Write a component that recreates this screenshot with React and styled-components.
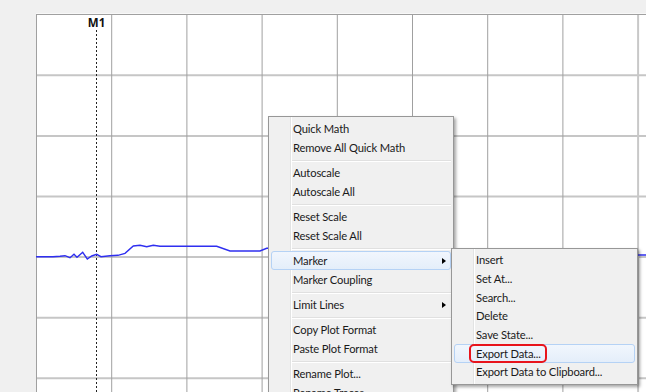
import React from 'react';
import styled, { createGlobalStyle } from 'styled-components';

const GlobalStyle = createGlobalStyle`
  html, body {
    margin: 0;
    padding: 0;
    background: #f0f0f0;
  }
  body {
    font-family: Lato, "Noto Sans", "Liberation Sans", sans-serif;
  }
`;

const Page = styled.div`
  position: relative;
  width: 646px;
  height: 392px;
  overflow: hidden;
  background: #f0f0f0;
  padding: 13px 0 0 36px;
  box-sizing: border-box;
  display: flex;
`;

const PlotPanel = styled.div`
  flex: 1;
  background: #ffffff;
  border-top: 1px solid #f8f8f8;
`;

const PlotSvg = styled.svg`
  display: block;
  width: 100%;
  height: 100%;
`;

// context menu, opened where the user right-clicked in the plot
const Menu = styled.div`
  position: absolute;
  left: 268px;
  top: 116px;
  width: 186px;
  box-sizing: border-box;
  display: flex;
  flex-direction: column;
  background: #f0f0f0;
  border: 1px solid #979797;
  box-shadow: 2px 2px 3px rgba(0, 0, 0, 0.35);
  padding: 2px;
  font-size: 11.2px;
  letter-spacing: -0.15px;
  color: #1a1a1a;
  z-index: 1;

  &::before {
    content: "";
    position: absolute;
    left: 21px;
    top: 0;
    bottom: 0;
    width: 1px;
    background: #e2e3e3;
    box-shadow: 1px 0 0 #ffffff;
  }
`;

// cascading menu hangs off its parent item
const SubMenu = styled(Menu)`
  left: calc(100% + 1px);
  top: -4px;
  width: 187px;
  z-index: 2;
`;

const Item = styled.div`
  position: relative;
  height: ${p => p.h || 19}px;
  display: flex;
  align-items: center;
  padding: 0 4px 0 21px;
  box-sizing: border-box;
  border: 1px solid ${p => (p.active ? '#b5d2f5' : 'transparent')};
  border-radius: 3px;
  background: ${p =>
    p.active ? 'linear-gradient(#f1f6fd, #e4eefa)' : 'transparent'};
  white-space: nowrap;
`;

const Label = styled.span`
  position: relative;
  padding-bottom: 1px;

  ${p =>
    p.annotated &&
    `
    &::after {
      content: "";
      position: absolute;
      left: -7px;
      right: -6px;
      top: -3px;
      bottom: -2px;
      border: 2px solid #e8141c;
      border-radius: 5px;
    }
  `}
`;

const Arrow = styled.span`
  margin-left: auto;
  width: 0;
  height: 0;
  border-top: 3.5px solid transparent;
  border-bottom: 3.5px solid transparent;
  border-left: 4px solid #000;
`;

const Separator = styled.div`
  height: 6px;
  display: flex;
  align-items: center;
  padding-left: 21px;

  &::after {
    content: "";
    flex: 1;
    height: 1px;
    background: #e0e0e0;
    box-shadow: 0 1px 0 #ffffff;
  }
`;

const markerItems = [
  { label: 'Insert' },
  { label: 'Set At...' },
  { label: 'Search...' },
  { label: 'Delete' },
  { label: 'Save State...' },
  { label: 'Export Data...', active: true, annotated: true },
  { label: 'Export Data to Clipboard...' },
];

const mainItems = [
  { label: 'Quick Math' },
  { label: 'Remove All Quick Math' },
  { sep: true },
  { label: 'Autoscale' },
  { label: 'Autoscale All' },
  { sep: true },
  { label: 'Reset Scale' },
  { label: 'Reset Scale All' },
  { sep: true },
  { label: 'Marker', sub: markerItems, open: true, active: true },
  { label: 'Marker Coupling' },
  { sep: true },
  { label: 'Limit Lines', sub: [] },
  { sep: true },
  { label: 'Copy Plot Format' },
  { label: 'Paste Plot Format' },
  { sep: true },
  { label: 'Rename Plot...' },
  { label: 'Rename Traces...' },
];

// plot coords are relative to the panel origin (36, 14)
const X0 = 36;
const Y0 = 14;
const vLines = [0, 1, 2, 3, 4, 5, 6, 7, 8].map(i => 75.2 * i);
const hLines = [1, 2, 3, 4, 5, 6].map(i => 0.7 + 60.6 * i);

const tracePts = [
  [36, 256.7], [53, 256.7], [60, 256.2], [65, 255.7], [70, 257.7], [74, 254.3],
  [77, 257.3], [82.7, 252.3], [87.3, 259], [91.7, 256], [96.7, 254.3],
  [101, 256.7], [110, 255.7], [118, 255.3], [125, 253.3], [133.3, 246],
  [140, 245.3], [146.7, 246.7], [153.3, 245.3], [160, 246.3], [216.7, 246.3],
  [230, 251], [260, 251], [266.7, 248.3], [300, 247], [400, 248],
  [560, 252], [620, 255], [646, 255],
];

const tracePath = tracePts
  .map(([x, y], i) => `${i ? 'L' : 'M'}${(x - X0).toFixed(1)} ${(y - Y0).toFixed(1)}`)
  .join(' ');

const Plot = () => (
  <PlotSvg>
    {hLines.map(y => (
      <line key={'h' + y} x1="0" x2="620" y1={y} y2={y} stroke="#c6c6c6" strokeWidth="2" />
    ))}
    {vLines.map((x, i) => (
      <line
        key={'v' + i}
        x1={x + 0.5}
        x2={x + 0.5}
        y1="0"
        y2="400"
        stroke={i === 8 ? '#c8c8c8' : '#a0a0a0'}
        strokeWidth={i === 8 ? 2 : 1}
      />
    ))}
    <line x1="0" x2="620" y1="0.5" y2="0.5" stroke="#a0a0a0" strokeWidth="1" />
    <line x1="60.5" x2="60.5" y1="16" y2="400" stroke="#222" strokeWidth="1" strokeDasharray="2 2" />
    <text
      x="60.5"
      y="13"
      textAnchor="middle"
      fontFamily="Noto Sans, Liberation Sans, sans-serif"
      fontWeight="700"
      fontSize="11.5"
      fill="#111"
    >
      M1
    </text>
    <path d={tracePath} fill="none" stroke="#2f2ff0" strokeWidth="1.4" />
  </PlotSvg>
);

const MenuItems = ({ items, h }) =>
  items.map((it, i) =>
    it.sep ? (
      <Separator key={i} />
    ) : (
      <Item key={i} active={it.active} h={h}>
        <Label annotated={it.annotated}>{it.label}</Label>
        {it.sub && <Arrow />}
        {it.open && (
          <SubMenu>
            <MenuItems items={it.sub} h={18.67} />
          </SubMenu>
        )}
      </Item>
    )
  );

export default function App() {
  return (
    <>
      <GlobalStyle />
      <Page>
        <PlotPanel>
          <Plot />
        </PlotPanel>
        <Menu>
          <MenuItems items={mainItems} />
        </Menu>
      </Page>
    </>
  );
}
